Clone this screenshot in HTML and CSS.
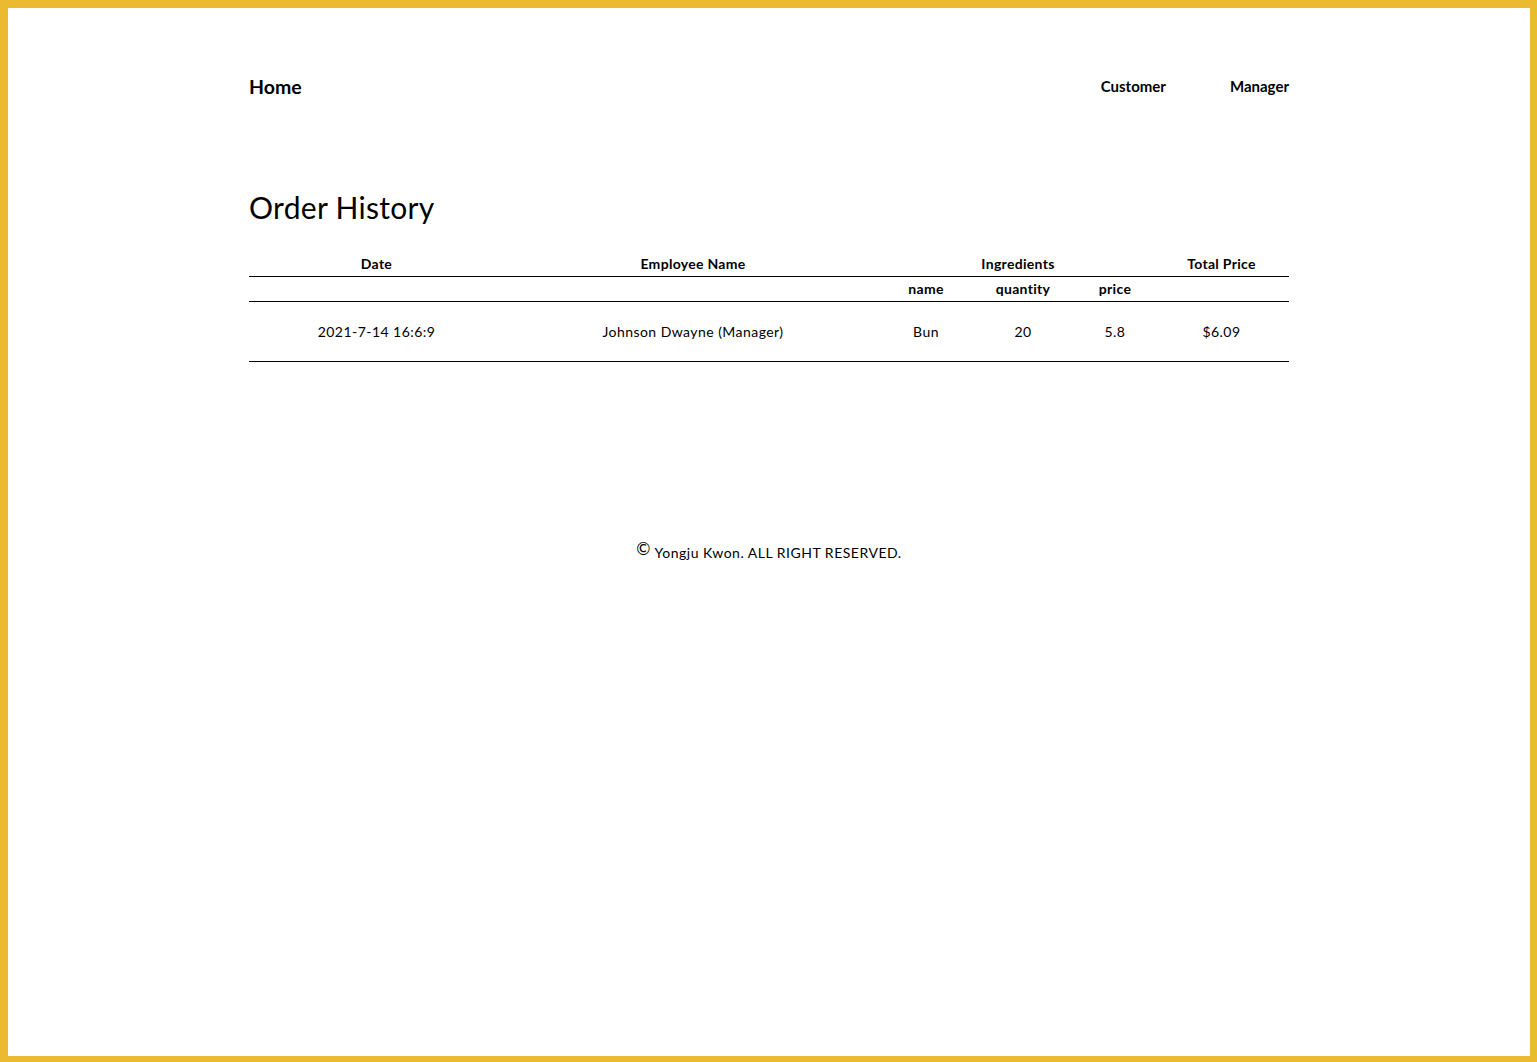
FILE: index.html
```html
<!DOCTYPE html>
<html lang="en">
<head>
<meta charset="utf-8">
<title>Order History</title>
<link rel="stylesheet" href="styles.css">
</head>
<body>
<div class="frame">
  <div class="container">
    <header class="nav">
      <a class="home" href="#">Home</a>
      <nav class="links">
        <a href="#">Customer</a>
        <a href="#">Manager</a>
      </nav>
    </header>
    <main>
      <h1 class="title">Order History</h1>
      <table class="orders">
        <colgroup>
          <col class="c-date">
          <col class="c-emp">
          <col class="c-name">
          <col class="c-qty">
          <col class="c-price">
          <col class="c-total">
        </colgroup>
        <thead>
          <tr class="head1">
            <th>Date</th>
            <th>Employee Name</th>
            <th colspan="3">Ingredients</th>
            <th>Total Price</th>
          </tr>
          <tr class="head2">
            <th></th>
            <th></th>
            <th>name</th>
            <th>quantity</th>
            <th>price</th>
            <th></th>
          </tr>
        </thead>
        <tbody>
          <tr>
            <td>2021-7-14 16:6:9</td>
            <td>Johnson Dwayne (Manager)</td>
            <td>Bun</td>
            <td>20</td>
            <td>5.8</td>
            <td>$6.09</td>
          </tr>
        </tbody>
      </table>
    </main>
    <footer class="footer"><span class="copy">©</span> Yongju Kwon. ALL RIGHT RESERVED.</footer>
  </div>
</div>
</body>
</html>
```
FILE: styles.css
```css
html, body {
  margin: 0;
  padding: 0;
}
body {
  font-family: Lato, "Open Sans", sans-serif;
  color: #000;
  background: #fff;
}
.frame {
  box-sizing: border-box;
  height: 1062px;
  border-style: solid;
  border-color: #ecba30;
  border-width: 8px 7px 6px 8px;
  overflow: hidden;
}
.container {
  width: 1040px;
  margin: 0 auto;
  padding-top: 65px;
}
.nav {
  display: flex;
  justify-content: space-between;
  align-items: center;
  height: 26px;
}
.nav a {
  color: #000;
  text-decoration: none;
  font-weight: 700;
}
.home {
  font-size: 19.5px;
}
.links {
  display: flex;
  gap: 64px;
  font-size: 15px;
}
.title {
  font-weight: 400;
  font-size: 30px;
  margin: 90px 0 27px;
  line-height: 36px;
  letter-spacing: 0.3px;
}
.orders {
  width: 100%;
  border-collapse: collapse;
  font-size: 14px;
  table-layout: fixed;
}
.c-date { width: 255px; }
.c-emp { width: 378px; }
.c-name { width: 88px; }
.c-qty { width: 106px; }
.c-price { width: 78px; }
.c-total { width: 135px; }
.orders th {
  font-weight: 700;
  padding: 0 0 1px;
  height: 23px;
  vertical-align: middle;
  letter-spacing: 0.3px;
}
.orders tr {
  border-bottom: 1px solid #000;
}
.orders td {
  text-align: center;
  height: 59px;
  padding: 0;
  letter-spacing: 0.45px;
}
.footer {
  text-align: center;
  font-size: 14px;
  letter-spacing: 0.5px;
  margin-top: 179px;
}
.copy {
  font-size: 17px;
  position: relative;
  top: -3px;
}
```
